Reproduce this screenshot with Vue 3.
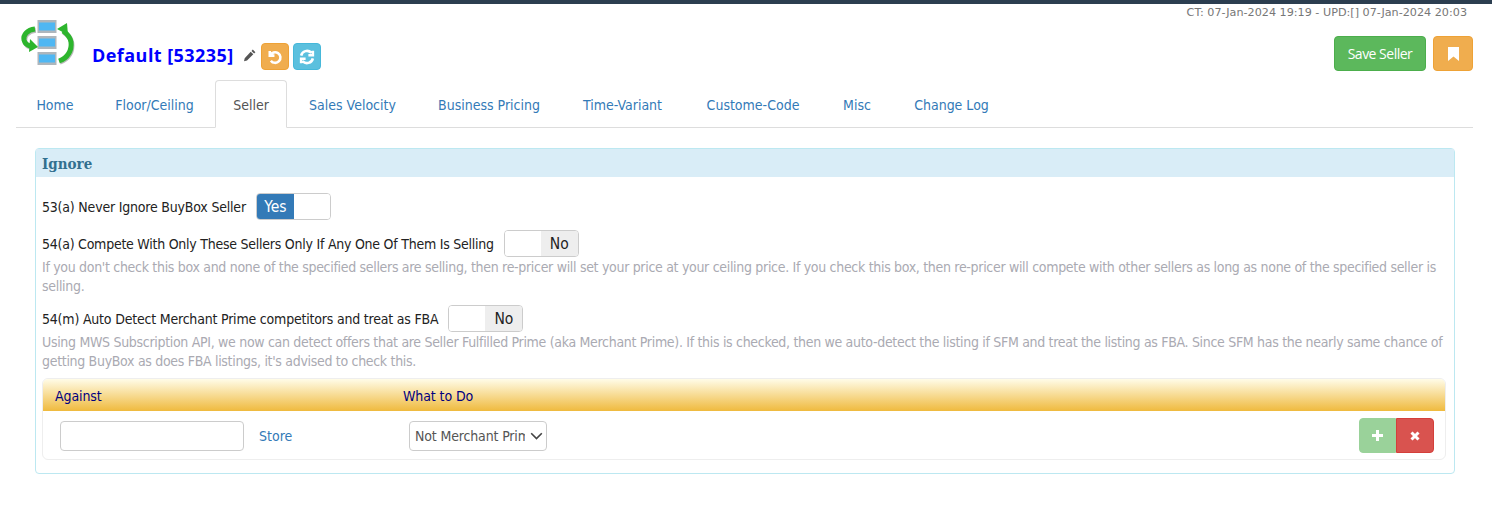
<script setup>
const tabs = [
  { name: 'Home', width: 78 },
  { name: 'Floor/Ceiling', width: 117 },
  { name: 'Seller', width: 72 },
  { name: 'Sales Velocity', width: 127 },
  { name: 'Business Pricing', width: 142 },
  { name: 'Time-Variant', width: 121 },
  { name: 'Custome-Code', width: 136 },
  { name: 'Misc', width: 68 },
  { name: 'Change Log', width: 117 }
]
</script>

<template>
  <div class="page">
    <div class="topbar"></div>
    <div class="meta">CT: 07-Jan-2024 19:19 - UPD:[] 07-Jan-2024 20:03</div>
    <header class="head">
      <div class="brand">
        <svg class="logo" width="56" height="50" viewBox="20 16 56 50">
          <g v-for="y in [20,36,52]" :key="y">
            <rect x="37.500" :y="y" width="19" height="13" fill="#aeb6bc"/>
            <rect x="39" :y="y+2.500" width="16" height="8" fill="#4fb7f3"/>
          </g>
          <g fill="none" stroke="#777" stroke-width="5" opacity=".5" transform="translate(.8 1.2)">
            <path d="M35 29C27 30 23 35 24 40c1 4 4 6 8 6"/>
            <path d="M59 61c9-3 13-11 12-19-1-6-5-9-8-11"/>
          </g>
          <path d="M35 29C27 30 23 35 24 40c1 4 4 6 8 6" fill="none" stroke="#2db52d" stroke-width="5"/>
          <path d="M30 39l8 8-9 5z" fill="#2db52d"/>
          <path d="M59 61c9-3 13-11 12-19-1-6-5-9-8-11" fill="none" stroke="#2db52d" stroke-width="5"/>
          <path d="M57 29l10-6 1 12z" fill="#2db52d"/>
        </svg>
        <h1 class="title">Default [53235]</h1>
        <svg class="pencil" width="13" height="13" viewBox="0 0 13 13"><path d="M9.800.6l2.600 2.600-1.300 1.300-2.600-2.600zM7.700 2.700l2.600 2.600L4 11.600 1 12.300l.7-3z" fill="#555"/></svg>
        <button class="sq orange">
          <svg width="16" height="16" viewBox="0 0 15 15"><path d="M2.600 1.800v4.400H7M3 6a5 5 0 1 1 .6 5" fill="none" stroke="#fff" stroke-width="2.400"/></svg>
        </button>
        <button class="sq blue">
          <svg width="16" height="16" viewBox="0 0 15 15"><path d="M2 6.200a5.600 5.600 0 0 1 9.600-2.600M13 1.600v4.200H8.800M13 8.800a5.600 5.600 0 0 1-9.600 2.600M2 13.400V9.200h4.200" fill="none" stroke="#fff" stroke-width="2.400"/></svg>
        </button>
      </div>
      <div class="actions">
        <button class="save">Save Seller</button>
        <button class="mark">
          <svg width="11" height="14" viewBox="0 0 11 14"><path d="M0 0h11v14L5.500 9.500 0 14z" fill="#fff"/></svg>
        </button>
      </div>
    </header>

    <nav class="tabs">
      <a v-for="t in tabs" :key="t.name" class="tab" :class="{ active: t.name === 'Seller' }" :style="{ width: t.width + 'px' }">{{ t.name }}</a>
    </nav>

    <section class="panel">
      <h2 class="panel-head">Ignore</h2>
      <div class="panel-body">
        <div class="row first">
          <span class="label">53(a) Never Ignore BuyBox Seller</span>
          <span class="toggle"><span class="on">Yes</span><span class="blank"></span></span>
        </div>
        <div class="row second">
          <span class="label">54(a) Compete With Only These Sellers Only If Any One Of Them Is Selling</span>
          <span class="toggle"><span class="blank"></span><span class="off">No</span></span>
        </div>
        <p class="help">If you don't check this box and none of the specified sellers are selling, then re-pricer will set your price at your ceiling price. If you check this box, then re-pricer will compete with other sellers as long as none of the specified seller is selling.</p>
        <div class="row third">
          <span class="label">54(m) Auto Detect Merchant Prime competitors and treat as FBA</span>
          <span class="toggle"><span class="blank"></span><span class="off">No</span></span>
        </div>
        <p class="help">Using MWS Subscription API, we now can detect offers that are Seller Fulfilled Prime (aka Merchant Prime). If this is checked, then we auto-detect the listing if SFM and treat the listing as FBA. Since SFM has the nearly same chance of getting BuyBox as does FBA listings, it's advised to check this.</p>

        <div class="table">
          <div class="thead"><span>Against</span><span>What to Do</span></div>
          <div class="tbody">
            <div class="against">
              <input class="input" type="text" />
              <a class="store">Store</a>
            </div>
            <div class="select-wrap">
              <select class="select"><option>Not Merchant Prime</option></select>
              <svg class="chev" width="13" height="8" viewBox="0 0 13 8"><path d="M1.200 1.200l5.300 5.300 5.300-5.300" fill="none" stroke="#444" stroke-width="1.600"/></svg>
            </div>
            <div class="btns">
              <button class="add"><svg width="11" height="11" viewBox="0 0 11 11"><path d="M5.500 0v11M0 5.500h11" stroke="#fff" stroke-width="3"/></svg></button>
              <button class="del"><svg width="10" height="10" viewBox="0 0 10 10"><path d="M1.500 1.500l7 7M8.500 1.500l-7 7" stroke="#fff" stroke-width="3"/></svg></button>
            </div>
          </div>
        </div>
      </div>
    </section>
  </div>
</template>

<style>
html, body { margin: 0; background: #fff; }
</style>

<style scoped>
.page { width: 1492px; height: 505px; overflow: hidden; font-family: "DejaVu Sans Condensed", "DejaVu Sans", sans-serif; font-size: 13px; color: #333; box-sizing: border-box; }
.topbar { height: 4px; background: #2c3e50; }
.meta { height: 19px; padding: 2px 25px 0 0; box-sizing: border-box; text-align: right; font-size: 11.200px; line-height: 14px; color: #777; font-family: "DejaVu Sans", sans-serif; }
.head { display: flex; justify-content: space-between; align-items: flex-start; height: 57px; padding: 0 19px 0 20px; }
.brand { display: flex; align-items: flex-start; }
.logo { margin-top: -7px; }
.title { margin: 18px 0 0 16px; font: bold 18px/28px "Open Sans", sans-serif; letter-spacing: .45px; color: #00f; }
.pencil { margin: 26px 5px 0 9px; }
.sq { width: 28px; height: 27px; margin: 20px 4px 0 0; padding: 0; border: 1px solid; border-radius: 4px; display: flex; align-items: center; justify-content: center; }
.orange { background: #f0ad4e; border-color: #eea236; }
.blue { background: #5bc0de; border-color: #46b8da; }
.actions { display: flex; gap: 7px; margin-top: 13px; }
.save { width: 92px; height: 35px; padding: 0; background: #5cb85c; border: 1px solid #4cae4c; border-radius: 4px; color: #fff; font: 14px "Open Sans", sans-serif; letter-spacing: -.5px; }
.mark { width: 40px; height: 35px; padding: 0; background: #f0ad4e; border: 1px solid #eea236; border-radius: 4px; display: flex; align-items: center; justify-content: center; }
.tabs { display: flex; height: 48px; margin: 0 19px 0 16px; border-bottom: 1px solid #ddd; box-sizing: border-box; gap: 2px; }
.tab { height: 47px; box-sizing: border-box; border: 1px solid transparent; border-radius: 4px 4px 0 0; font-size: 14px; line-height: 47px; text-align: center; color: #337ab7; padding-top: 1px; }
.tab.active { height: 48px; color: #555; background: #fff; border-color: #ddd; border-bottom-color: #fff; }
.panel { margin: 20px 37px 0 35px; height: 326px; box-sizing: border-box; border: 1px solid #bce8f1; border-radius: 4px; }
.panel-head { margin: 0; height: 28px; padding: 0 6px; background: #d9edf7; font: bold 15px/30px "DejaVu Serif Condensed", "DejaVu Serif", serif; color: #31708f; }
.panel-body { padding: 0 7px 0 6px; }
.row { display: flex; align-items: center; gap: 10px; height: 27px; color: #222; }
.first { margin-top: 16px; }
.row:not(.first) { margin-top: 10px; }
.row.third { margin-top: 9px; }
.label { font-size: 14px; letter-spacing: -.2px; padding-top: 1px; }
.second .label { letter-spacing: -.245px; }
.toggle { display: flex; width: 75px; height: 27px; box-sizing: border-box; border: 1px solid #ccc; border-radius: 4px; overflow: hidden; font-size: 15.500px; }
.toggle .blank { flex: 1; background: #fff; }
.on, .off { width: 37px; display: flex; align-items: center; justify-content: center; }
.on { background: #337ab7; color: #fff; }
.off { background: #eee; color: #222; }
.help { margin: 1px 0 0; font-size: 14px; line-height: 19px; letter-spacing: -.31px; color: #aaaab2; width: 1408px; }
.table { margin-top: 7px; height: 82px; border: 1px solid #eee; border-radius: 6px; box-sizing: border-box; overflow: hidden; width: 1404px; }
.thead { display: grid; grid-template-columns: 348px 1fr; height: 32px; padding: 0 12px; background: linear-gradient(#fffce8, #efba3e); color: #000080; font-size: 14px; letter-spacing: -.1px; line-height: 34px; }
.tbody { display: flex; align-items: center; height: 48px; padding: 1px 11px 0 17px; box-sizing: border-box; }
.against { display: flex; align-items: center; width: 349px; }
.input { width: 184px; height: 30px; padding: 0; box-sizing: border-box; border: 1px solid #ccc; border-radius: 4px; background: #fff; }
.store { margin-left: 15px; color: #337ab7; font-size: 14px; }
.select-wrap { position: relative; width: 138px; height: 30px; }
.select { appearance: none; width: 138px; height: 30px; padding: 0 21px 0 5px; box-sizing: border-box; border: 1px solid #ccc; border-radius: 4px; background: #fff; color: #555; font: 14px "DejaVu Sans Condensed", sans-serif; letter-spacing: -.15px; }
.chev { position: absolute; right: 4px; top: 11px; pointer-events: none; }
.btns { display: flex; margin-left: auto; }
.add, .del { height: 35px; padding: 0; border: 1px solid; display: flex; align-items: center; justify-content: center; }
.add { width: 37px; background: #9ad29a; border-color: #9ad29a; border-radius: 4px 0 0 4px; }
.del { width: 38px; background: #d9534f; border-color: #d43f3a; border-radius: 0 4px 4px 0; }
</style>
